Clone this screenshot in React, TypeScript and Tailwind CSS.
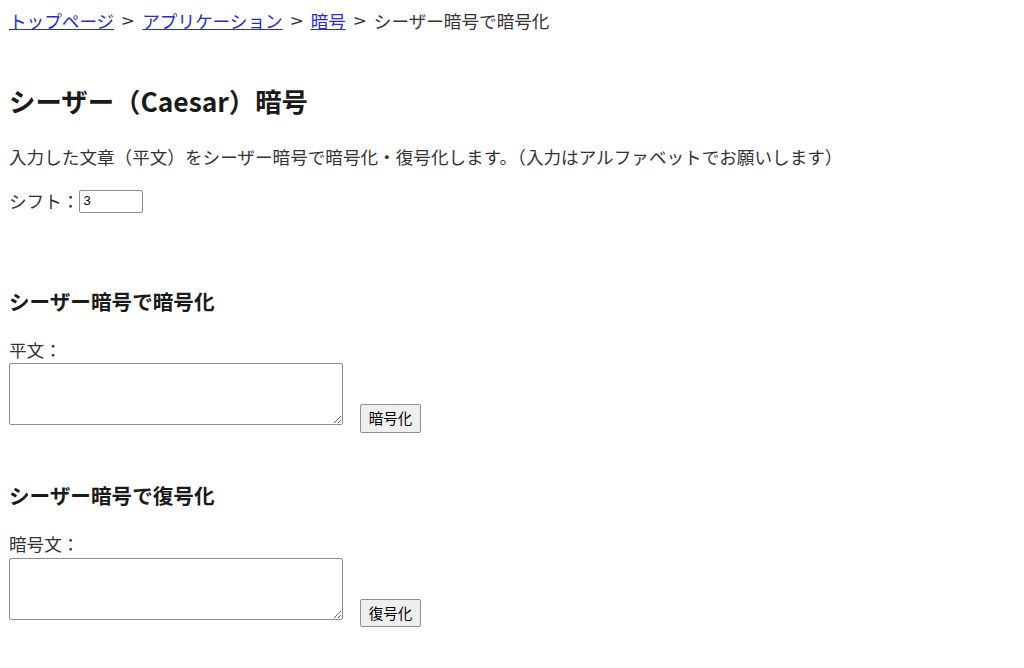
import React from "react";

const font = { fontFamily: '"Noto Sans CJK JP", "Noto Sans", sans-serif' };

function Sep() {
  return <span className="inline-block w-[28px] text-center"><span className="inline-block scale-x-125">&gt;</span></span>;
}

export default function App() {
  return (
    <div className="w-[1024px] h-[668px] bg-white text-[#333] px-[9px] pt-[9px] text-[17.6px] overflow-hidden" style={font}>
      <div className="leading-[24px] h-[24px] whitespace-nowrap">
        <a href="#" className="text-[#2a2ad0] underline">トップページ</a>
        <Sep />
        <a href="#" className="text-[#2a2ad0] underline">アプリケーション</a>
        <Sep />
        <a href="#" className="text-[#2a2ad0] underline">暗号</a>
        <Sep />
        <span>シーザー暗号で暗号化</span>
      </div>
      <h2 className="mt-[52px] text-[26.4px] font-bold leading-[32px] text-[#1a1a1a]">シーザー（Caesar）暗号</h2>
      <p className="mt-[28px] leading-[24px]">入力した文章（平文）をシーザー暗号で暗号化・復号化します。（入力はアルファベットでお願いします）</p>
      <div className="mt-[20px] flex items-center h-[24px] leading-[24px]">
        <span>シフト：</span>
        <input
          type="text"
          defaultValue="3"
          className="w-[64px] h-[23px] border border-[#8f8f8f] rounded-[2px] px-[3px] text-[13px] text-black outline-none"
          style={{ fontFamily: '"Liberation Sans", Arial, sans-serif' }}
        />
      </div>
      <h3 className="mt-[75px] text-[20.6px] font-bold leading-[26px] text-[#1a1a1a]">シーザー暗号で暗号化</h3>
      <div className="mt-[24px] leading-[24px]">平文：</div>
      <div className="mt-[1px] flex items-start">
        <textarea className="w-[334px] h-[62px] border border-[#8f8f8f] rounded-[2px] resize-y outline-none" />
        <button className="ml-[17px] mt-[41px] w-[61px] h-[29px] border border-[#8f8f8f] rounded-[2px] bg-[#efefef] text-[14.5px] text-black leading-none">暗号化</button>
      </div>
      <h3 className="mt-[49px] text-[20.6px] font-bold leading-[26px] text-[#1a1a1a]">シーザー暗号で復号化</h3>
      <div className="mt-[24px] leading-[24px]">暗号文：</div>
      <div className="mt-[2px] flex items-start">
        <textarea className="w-[334px] h-[62px] border border-[#8f8f8f] rounded-[2px] resize-y outline-none" />
        <button className="ml-[17px] mt-[41px] w-[61px] h-[28px] border border-[#8f8f8f] rounded-[2px] bg-[#efefef] text-[14.5px] text-black leading-none">復号化</button>
      </div>
    </div>
  );
}
